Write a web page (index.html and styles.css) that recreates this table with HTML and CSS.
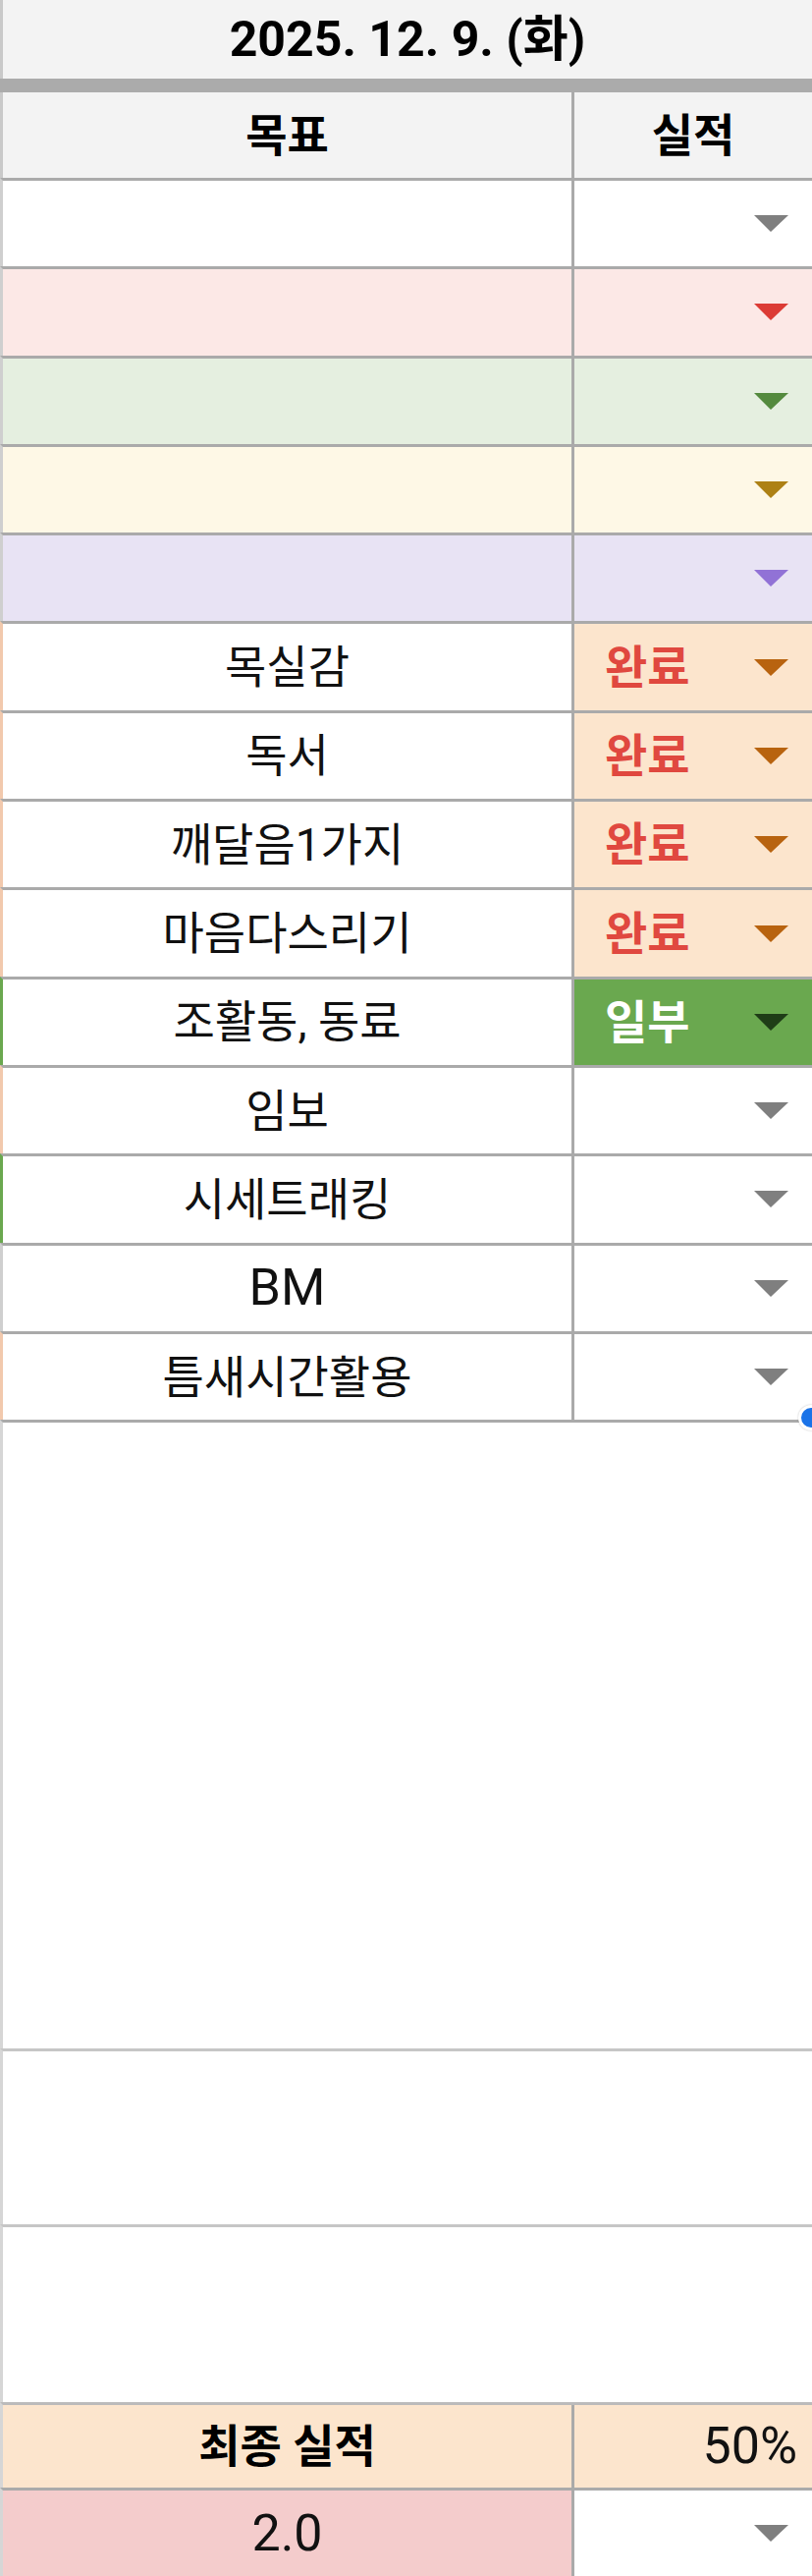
FILE: index.html
```html
<!DOCTYPE html>
<html lang="ko">
<head>
<meta charset="utf-8">
<title>2025. 12. 9. (화)</title>
<link rel="stylesheet" href="styles.css">
</head>
<body>
<div class="sheet">
  <div class="title">2025. 12. 9. (화)</div>
  <div class="thick"></div>
  <div class="row head">
    <div class="cell">목표</div>
    <div class="cell">실적</div>
  </div>

  <div class="row">
    <div class="cell"></div>
    <div class="cell status"><span class="arrow a-gray"></span></div>
  </div>
  <div class="row bg-red">
    <div class="cell"></div>
    <div class="cell status"><span class="arrow a-red"></span></div>
  </div>
  <div class="row bg-green">
    <div class="cell"></div>
    <div class="cell status"><span class="arrow a-green"></span></div>
  </div>
  <div class="row bg-yellow">
    <div class="cell"></div>
    <div class="cell status"><span class="arrow a-yellow"></span></div>
  </div>
  <div class="row bg-purple">
    <div class="cell"></div>
    <div class="cell status"><span class="arrow a-purple"></span></div>
  </div>

  <div class="row edge-peach">
    <div class="cell">목실감</div>
    <div class="cell status done"><span class="val">완료</span><span class="arrow a-orange"></span></div>
  </div>
  <div class="row edge-peach">
    <div class="cell">독서</div>
    <div class="cell status done"><span class="val">완료</span><span class="arrow a-orange"></span></div>
  </div>
  <div class="row edge-peach">
    <div class="cell">깨달음1가지</div>
    <div class="cell status done"><span class="val">완료</span><span class="arrow a-orange"></span></div>
  </div>
  <div class="row edge-peach">
    <div class="cell">마음다스리기</div>
    <div class="cell status done"><span class="val">완료</span><span class="arrow a-orange"></span></div>
  </div>
  <div class="row edge-green">
    <div class="cell">조활동, 동료</div>
    <div class="cell status part"><span class="val">일부</span><span class="arrow a-dark"></span></div>
  </div>
  <div class="row edge-peach">
    <div class="cell">임보</div>
    <div class="cell status"><span class="arrow a-gray"></span></div>
  </div>
  <div class="row edge-green">
    <div class="cell">시세트래킹</div>
    <div class="cell status"><span class="arrow a-gray"></span></div>
  </div>
  <div class="row">
    <div class="cell lat">BM</div>
    <div class="cell status"><span class="arrow a-gray"></span></div>
  </div>
  <div class="row edge-peach">
    <div class="cell">틈새시간활용</div>
    <div class="cell status"><span class="arrow a-gray"></span></div>
  </div>

  <div class="blank b1"></div>
  <div class="blank b2"></div>
  <div class="blank b3"></div>

  <div class="row total">
    <div class="cell strong">최종 실적</div>
    <div class="cell lat pct">50%</div>
  </div>
  <div class="row last">
    <div class="cell lat score">2.0</div>
    <div class="cell status plain"><span class="arrow a-gray"></span></div>
  </div>

  <span class="handle"></span>
</div>
</body>
</html>
```

FILE: styles.css
```css
html, body {
  margin: 0;
  padding: 0;
  background: #ffffff;
}

body {
  font-family: Roboto, "Noto Sans CJK KR", sans-serif;
  color: #111111;
}

.sheet {
  position: relative;
  width: 827px;
  height: 2622px;
  overflow: hidden;
  background: #ffffff;
}

.title {
  box-sizing: border-box;
  height: 80px;
  background: #f3f3f3;
  border-left: 3px solid #c9c9c9;
  display: flex;
  align-items: center;
  justify-content: center;
  font-size: 50px;
  font-weight: 700;
  color: #000000;
  line-height: 1;
}

.thick {
  height: 14px;
  background: #ababab;
}

.row {
  box-sizing: border-box;
  display: grid;
  grid-template-columns: 579px 1fr;
  height: 90.3px;
  border-top: 3px solid #aaaaaa;
  border-left: 3px solid #cfcfcf;
  background: #ffffff;
}

.cell {
  display: flex;
  align-items: center;
  justify-content: center;
  font-size: 46px;
  line-height: 1;
  min-width: 0;
}

.cell + .cell {
  border-left: 3px solid #aaaaaa;
}

.head {
  height: 87px;
  border-top: 0;
  background: #f3f3f3;
  border-left-color: #c9c9c9;
}

.head .cell {
  font-weight: 700;
  color: #000000;
}

.lat {
  font-size: 52px;
}

/* coloured rows */
.bg-red { background: #fce8e6; }
.bg-green { background: #e5efe0; }
.bg-yellow { background: #fef8e6; }
.bg-purple { background: #e8e3f4; }

.edge-peach { border-left-color: #f2c9ad; }
.edge-green { border-left-color: #6aa84f; }

/* status (dropdown) cells */
.status {
  justify-content: flex-start;
  padding: 0 24px 0 31px;
}

.status .val {
  font-weight: 700;
  font-size: 47px;
}

.arrow {
  margin-left: auto;
  width: 0;
  height: 0;
  border-left: 17px solid transparent;
  border-right: 18px solid transparent;
  border-top: 17px solid #7f7f7f;
}

.a-gray { border-top-color: #7f7f7f; }
.a-red { border-top-color: #dc3b35; }
.a-green { border-top-color: #548a3e; }
.a-yellow { border-top-color: #ad8115; }
.a-purple { border-top-color: #9172d6; }
.a-orange { border-top-color: #b8630f; }
.a-dark { border-top-color: #1f3d17; }

.done {
  background: #fce5cd;
}

.done .val {
  color: #e0483f;
}

.part {
  background: #6aa84f;
}

.part .val {
  color: #ffffff;
}

/* blank full-width rows */
.blank {
  box-sizing: border-box;
  border-left: 3px solid #d6d6d6;
}

.b1 {
  height: 640px;
  border-top: 3px solid #aaaaaa;
}

.b2 {
  height: 179px;
  border-top: 3px solid #c6c6c6;
}

.b3 {
  height: 181px;
  border-top: 3px solid #c6c6c6;
}

/* totals */
.total {
  height: 87px;
  border-top-color: #bbbbbb;
  background: #fce5cd;
  border-left-color: #d6d6d6;
}

.strong {
  font-weight: 700;
  color: #000000;
}

.pct {
  justify-content: flex-end;
  padding-right: 15px;
  font-size: 52px;
}

.last {
  height: 90px;
  border-left-color: #d6d6d6;
}

.score {
  background: #f4cccc;
}

.plain {
  background: #ffffff;
}

/* selection handle overlay */
.handle {
  position: absolute;
  left: 813px;
  top: 1430px;
  width: 20px;
  height: 20px;
  border-radius: 50%;
  background: #1a73e8;
  border: 3px solid #ffffff;
  box-shadow: 0 0 2px rgba(0, 0, 0, 0.25);
}
```
